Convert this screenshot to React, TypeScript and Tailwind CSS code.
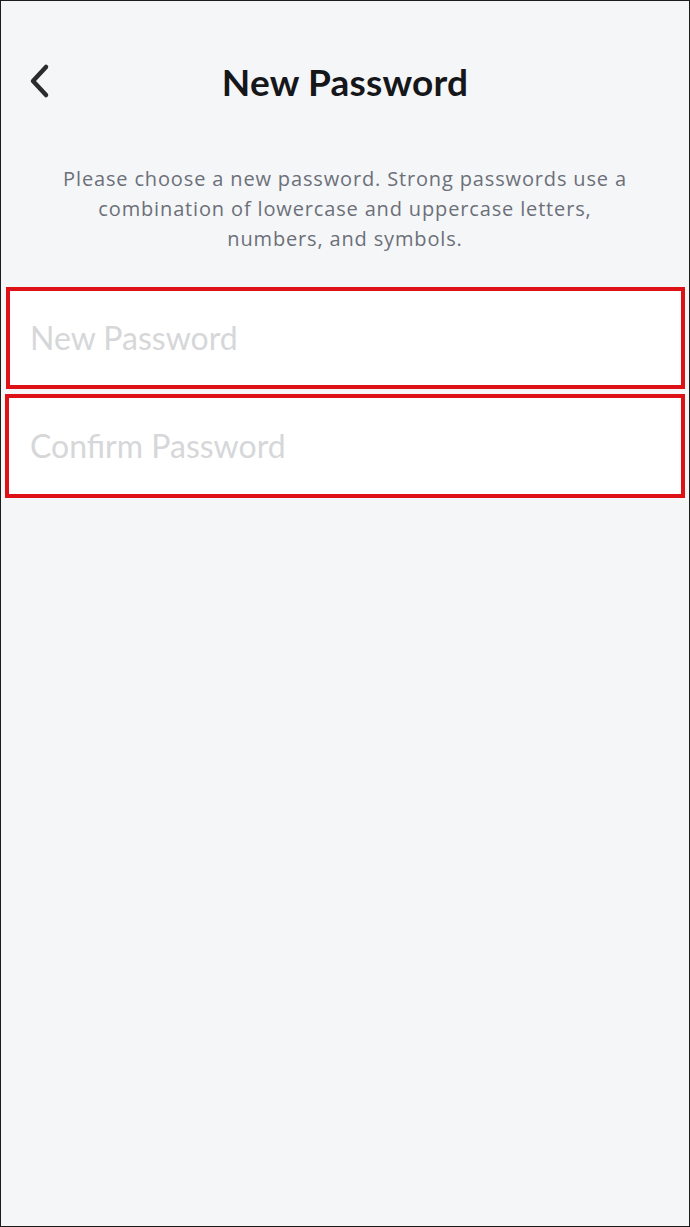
import React from "react";

export default function App() {
  return (
    <div
      className="w-[690px] h-[1227px] bg-[#f5f6f8] border border-[#1c1c1c] flex flex-col"
      style={{ fontFamily: "Lato, 'Open Sans', sans-serif" }}
    >
      <div className="grid grid-cols-[1fr_auto_1fr] items-center h-[80px] mt-[40px]">
        <div className="pl-[25px] flex items-center">
          <svg width="28" height="38" viewBox="0 0 28 38" fill="none">
            <path
              d="M20 5 L7 19 L20 33"
              stroke="#2b2b2e"
              strokeWidth="4.5"
              strokeLinecap="round"
              strokeLinejoin="round"
            />
          </svg>
        </div>
        <h1 className="text-[37px] font-bold text-[#16171a] tracking-[0.2px] leading-none">
          New Password
        </h1>
        <div />
      </div>
      <p
        className="mt-[43px] px-[10px] text-center text-[20px] leading-[30px] text-[#6c7079] tracking-[0.85px]"
        style={{ fontFamily: "'Open Sans', Lato, sans-serif" }}
      >
        Please choose a new password. Strong passwords use a
        <br />
        combination of lowercase and uppercase letters,
        <br />
        numbers, and symbols.
      </p>
      <div className="mt-[33px] pl-[4px] pr-[4px] flex flex-col gap-[5px]">
        <div className="h-[102px] ml-[1px] bg-white border-[4px] border-[#dd1116] flex items-center pl-[20px]">
          <span className="text-[32px] text-[#d6d7d9]">New Password</span>
        </div>
        <div className="h-[104px] bg-white border-[4px] border-[#dd1116] flex items-center pl-[21px]">
          <span className="text-[32px] text-[#d6d7d9]">Confirm Password</span>
        </div>
      </div>
    </div>
  );
}
